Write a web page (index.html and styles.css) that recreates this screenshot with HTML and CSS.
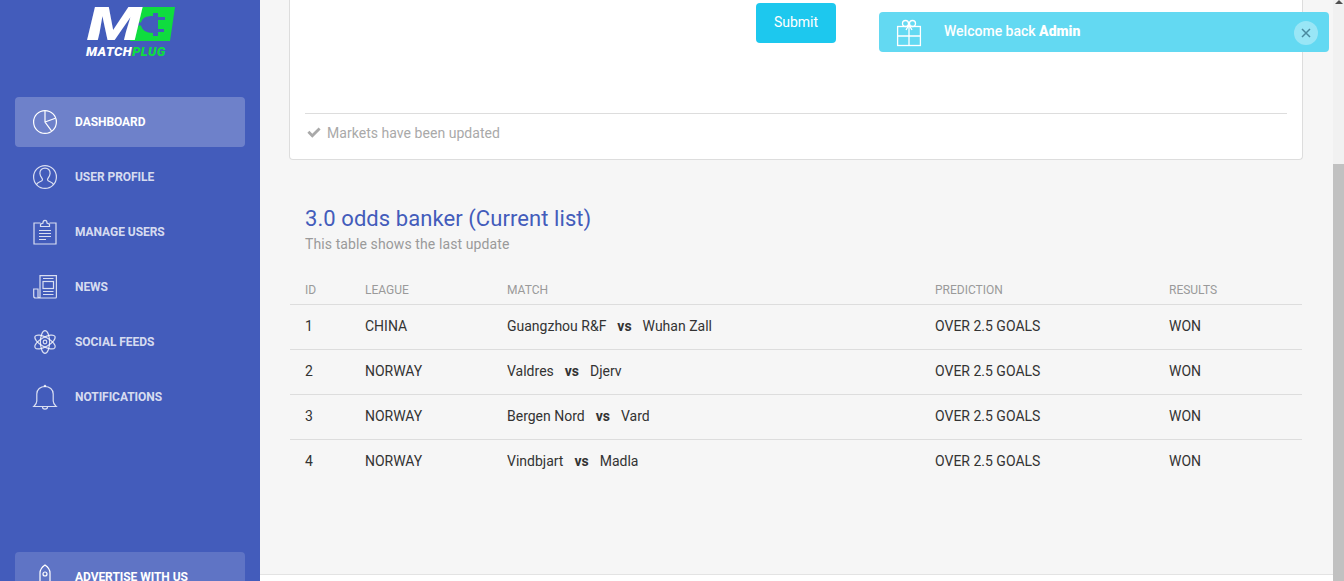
FILE: index.html
```html
<!DOCTYPE html>
<html lang="en">
<head>
<meta charset="utf-8">
<title>MatchPlug Dashboard</title>
<link rel="stylesheet" href="styles.css">
</head>
<body>
<div class="app">
  <aside class="sidebar">
    <div class="logo">
      <div class="logo-mark">
        <span class="logo-m">M</span>
        <svg class="logo-plug" viewBox="0 0 45 34" width="45" height="34">
          <polygon fill="#0fdc3f" points="9,0 45,0 40,34 0,34"/>
          <path fill="#435cbb" d="M2 15.500h9C12 11 16 9 23 9V6h5v4h7v3h-7v9h6v3h-6v4h-5v-3c-7 0-11-3-12-7.500H1z"/>
        </svg>
      </div>
      <div class="logo-text">MATCH<span class="logo-green">PLUG</span></div>
    </div>
    <nav class="nav">
      <a class="nav-item active">
        <svg class="nav-icon" viewBox="0 0 24 24"><circle cx="12" cy="12" r="11.400"/><path d="M12 .6V12l6.500 8.800M12 12l10.400-3.800"/></svg>
        <span>Dashboard</span>
      </a>
      <a class="nav-item">
        <svg class="nav-icon" viewBox="0 0 24 24"><circle cx="12" cy="12" r="11.400"/><path d="M3.600 19.500c.6-2.700 5.400-2.700 5.900-4.700.3-1.200-2.300-2.800-2.600-6.300C6.700 5 9 3.200 12 3.200s5.300 1.800 5.100 5.300c-.3 3.500-2.900 5.100-2.600 6.300.5 2 5.300 2 5.900 4.700"/></svg>
        <span>User Profile</span>
      </a>
      <a class="nav-item">
        <svg class="nav-icon" viewBox="0 0 24 24"><path d="M7.500 3H1v21h22V3h-6.500"/><path d="M7.500 6.500V4.200L10 3c0-3.400 4-3.400 4 0l2.500 1.200v2.300z"/><path d="M6 10.500h12M6 13.500h12M6 16.500h12M6 19.500h7"/></svg>
        <span>Manage Users</span>
      </a>
      <a class="nav-item">
        <svg class="nav-icon" viewBox="0 0 24 24"><path d="M7 23h15.500c.5 0 .9-.4.900-.9V.6H7v22.200c-2 0-2-.5-2-1V14H.700v7c0 1.300 1 2 2 2H7"/><path d="M10 3.500h10.500M10 16.500h10.500M10 19.500h10.500"/><rect x="10" y="6.500" width="10.500" height="7"/></svg>
        <span>News</span>
      </a>
      <a class="nav-item">
        <svg class="nav-icon" viewBox="0 0 24 24"><ellipse cx="12" cy="12" rx="4.600" ry="11.400"/><ellipse cx="12" cy="12" rx="4.600" ry="11.400" transform="rotate(60 12 12)"/><ellipse cx="12" cy="12" rx="4.600" ry="11.400" transform="rotate(-60 12 12)"/><circle cx="12" cy="12" r="1.800"/></svg>
        <span>Social Feeds</span>
      </a>
      <a class="nav-item">
        <svg class="nav-icon" viewBox="0 0 24 24"><path d="M.8 21.500h22.400c-1.600-1.500-3-2.800-3-5.500V9C20.200 4.500 16.500 1.500 12 1.500S3.800 4.500 3.800 9v7c0 2.700-1.400 4-3 5.500z"/><circle cx="12" cy="1" r=".7"/><path d="M9.500 22c0 2.700 5 2.700 5 0"/></svg>
        <span>Notifications</span>
      </a>
      <a class="nav-item advert">
        <svg class="nav-icon" viewBox="0 0 24 24"><path d="M7 20V8c0-3 2-6 5-8 3 2 5 5 5 8v12"/><circle cx="12" cy="9" r="2"/><path d="M7 17l-3 5M17 17l3 5"/></svg>
        <span>Advertise with us</span>
      </a>
    </nav>
  </aside>

  <main class="main">
    <div class="content">
      <section class="card">
        <div class="card-action"><button class="submit" type="button">Submit</button></div>
        <div class="card-foot">
          <svg class="check" viewBox="0 0 14 11"><path d="M.4 5.800 2.400 3.800l2.900 2.900L11.600.4l2 2-8.300 8.300z"/></svg>
          <span>Markets have been updated</span>
        </div>
      </section>

      <section class="list">
        <h2 class="list-title">3.0 odds banker (Current list)</h2>
        <p class="list-sub">This table shows the last update</p>
        <table class="odds">
          <colgroup>
            <col class="c-id"><col class="c-league"><col class="c-match"><col class="c-pred"><col class="c-res">
          </colgroup>
          <thead>
            <tr><th>ID</th><th>League</th><th>Match</th><th>Prediction</th><th>Results</th></tr>
          </thead>
          <tbody>
            <tr><td>1</td><td>CHINA</td><td>Guangzhou R&amp;F <b class="vs">vs</b> Wuhan Zall</td><td>OVER 2.5 GOALS</td><td>WON</td></tr>
            <tr><td>2</td><td>NORWAY</td><td>Valdres <b class="vs">vs</b> Djerv</td><td>OVER 2.5 GOALS</td><td>WON</td></tr>
            <tr><td>3</td><td>NORWAY</td><td>Bergen Nord <b class="vs">vs</b> Vard</td><td>OVER 2.5 GOALS</td><td>WON</td></tr>
            <tr><td>4</td><td>NORWAY</td><td>Vindbjart <b class="vs">vs</b> Madla</td><td>OVER 2.5 GOALS</td><td>WON</td></tr>
          </tbody>
        </table>
      </section>
    </div>
    <footer class="footer"></footer>
  </main>

  <div class="scrollbar">
    <div class="scroll-arrow"></div>
    <div class="scroll-thumb"></div>
  </div>
</div>

<div class="toast">
  <svg class="toast-icon" viewBox="0 0 24 26"><rect x=".6" y="6.500" width="22.800" height="19"/><path d="M.6 16h22.800M12 6.500v19"/><circle cx="8.500" cy="3.500" r="3"/><circle cx="15.500" cy="3.500" r="3"/><path d="M12 5 9 10M12 5l3 5"/></svg>
  <span class="toast-text">Welcome back <b>Admin</b></span>
  <span class="toast-close"><svg viewBox="0 0 10 10" width="10" height="10"><path d="M1 1l8 8M9 1 1 9"/></svg></span>
</div>
</body>
</html>
```

FILE: styles.css
```css
* { box-sizing: border-box; }
html, body { margin: 0; height: 100%; overflow: hidden; }
body { font-family: Roboto, "Liberation Sans", sans-serif; font-size: 14px; color: #333; background: #f6f6f6; }

.app { display: flex; height: 581px; overflow: hidden; }

/* sidebar */
.sidebar { flex: 0 0 260px; background: #435cbb; padding: 7px 15px 0; overflow: hidden; }
.logo { height: 90px; display: flex; flex-direction: column; align-items: flex-start; padding-left: 71px; }
.logo-mark { display: flex; height: 34px; align-items: flex-start; padding-left: 1px; }
.logo-m { display: block; width: 43px; font-size: 47px; line-height: 34px; font-weight: 900; font-style: italic; color: #fff; transform: scaleX(1.36); transform-origin: left center; }
.logo-plug { display: block; flex: none; }
.logo-text { margin-top: 3px; font-size: 13px; line-height: 15px; font-weight: 900; font-style: italic; color: #fff; letter-spacing: .45px; }
.logo-green { color: #0fdc3f; }

.nav { display: flex; flex-direction: column; gap: 5px; }
.nav-item { display: flex; align-items: center; height: 50px; padding-left: 18px; gap: 18px; border-radius: 4px; color: rgba(255,255,255,.8); font-size: 12px; font-weight: 700; letter-spacing: -.05px; text-transform: uppercase; }
.nav-item.active { background: rgba(255,255,255,.23); color: #fff; }
.nav-item.advert { margin-top: 125px; background: rgba(255,255,255,.15); color: #fff; }
.nav-icon { width: 24px; height: 24px; flex: none; fill: none; stroke: currentColor; stroke-width: 1.200; overflow: visible; }

/* main */
.main { flex: 1; min-width: 0; display: flex; flex-direction: column; }
.content { flex: 1; padding: 0 30px 0 29px; }
.footer { flex: 0 0 7px; background: #fff; border-top: 1px solid #e3e3e3; }

.card { height: 160px; background: #fff; border: 1px solid #ddd; border-top: 0; border-radius: 0 0 4px 4px; padding: 3px 15px 0; }
.card-action { height: 110px; display: flex; justify-content: center; align-items: flex-start; }
.submit { width: 80px; height: 40px; border: 0; border-radius: 4px; background: #1dc8ee; color: #fff; font: 400 14px Roboto, sans-serif; padding: 0 0 3px; }
.card-foot { border-top: 1px solid #ddd; height: 38px; display: flex; align-items: center; gap: 6px; padding: 0 0 0 2px; color: #a9a9a9; letter-spacing: .04px; }
.check { width: 14px; height: 11px; fill: #a9a9a9; }

.list { padding-top: 44px; }
.list-title { margin: 0 0 0 16px; font-size: 22px; line-height: 30px; font-weight: 400; color: #435cbb; letter-spacing: .07px; }
.list-sub { margin: 0 0 0 16px; font-size: 14px; line-height: 20px; color: #9a9a9a; letter-spacing: .1px; }

.odds { width: 1012px; margin: 27px 0 0 1px; border-collapse: collapse; table-layout: fixed; }
.c-id { width: 60px; }
.c-league { width: 142px; }
.c-match { width: 428px; }
.c-pred { width: 234px; }
.c-res { width: 148px; }
.odds th { padding: 0 15px; height: 23px; text-align: left; font-size: 12px; font-weight: 400; color: #9a9a9a; text-transform: uppercase; border-bottom: 1px solid #ddd; vertical-align: top; line-height: 18px; }
.odds td { padding: 0 15px 2px; height: 45px; border-bottom: 1px solid #ddd; color: #333; }
.odds tbody tr:last-child td { border-bottom: 0; }
.vs { margin: 0 7.500px; font-weight: 700; }

/* scrollbar */
.scrollbar { flex: 0 0 11px; position: relative; background: #f1f1f1; }
.scroll-arrow { width: 0; height: 0; margin: 0 auto; border: 4px solid transparent; border-top: 0; border-bottom: 4px solid #505050; }
.scroll-thumb { position: absolute; top: 164px; left: 0; right: 0; bottom: 0; background: #c1c1c1; }

/* toast */
.toast { position: fixed; left: 879px; top: 12px; width: 450px; height: 40px; background: #63d9f2; border-radius: 4px; display: flex; align-items: center; color: #fff; padding: 0 11px 0 18px; }
.toast-icon { width: 24px; height: 26px; flex: none; fill: none; stroke: #fff; stroke-width: 1.300; overflow: visible; margin-top: 1px; }
.toast-text { margin-left: 23px; flex: 1; font-weight: 500; padding-bottom: 2px; }
.toast-text b { font-weight: 900; }
.toast-close { width: 24px; height: 24px; border-radius: 50%; background: rgba(255,255,255,.35); display: flex; align-items: center; justify-content: center; margin-top: 1px; }
.toast-close svg { fill: none; stroke: #4a8a9f; stroke-width: 1.500; }
```
